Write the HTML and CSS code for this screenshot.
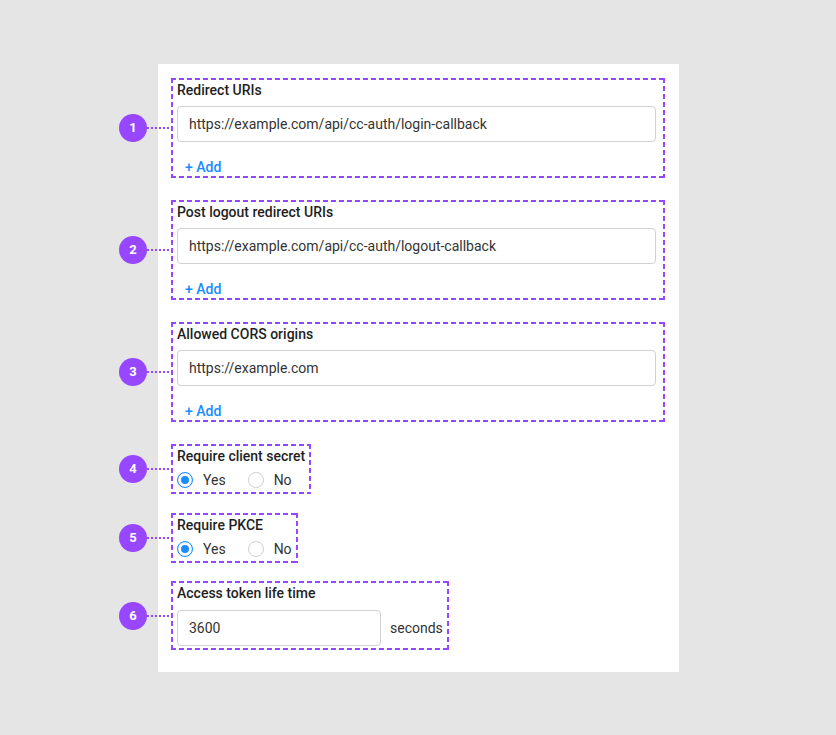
FILE: index.html
```html
<!DOCTYPE html>
<html>
<head>
<meta charset="utf-8">
<link rel="stylesheet" href="styles.css">
</head>
<body>
<div class="panel">
  <section class="box box-text">
    <span class="badge">1</span>
    <div class="label">Redirect URIs</div>
    <div class="input">https://example.com/api/cc-auth/login-callback</div>
    <div class="add">+ Add</div>
  </section>
  <section class="box box-text">
    <span class="badge">2</span>
    <div class="label">Post logout redirect URIs</div>
    <div class="input">https://example.com/api/cc-auth/logout-callback</div>
    <div class="add">+ Add</div>
  </section>
  <section class="box box-text">
    <span class="badge">3</span>
    <div class="label">Allowed CORS origins</div>
    <div class="input">https://example.com</div>
    <div class="add">+ Add</div>
  </section>
  <section class="box box-fit box-radio">
    <span class="badge">4</span>
    <div class="label">Require client secret</div>
    <div class="radios">
      <span class="radio checked"></span><span class="rlabel">Yes</span>
      <span class="radio"></span><span class="rlabel">No</span>
    </div>
  </section>
  <section class="box box-fit box-radio">
    <span class="badge">5</span>
    <div class="label">Require PKCE</div>
    <div class="radios">
      <span class="radio checked"></span><span class="rlabel">Yes</span>
      <span class="radio"></span><span class="rlabel">No</span>
    </div>
  </section>
  <section class="box box-fit box-token">
    <span class="badge">6</span>
    <div class="label">Access token life time</div>
    <div class="token-row">
      <div class="input input-short">3600</div>
      <span class="unit">seconds</span>
    </div>
  </section>
</div>
</body>
</html>
```

FILE: styles.css
```css
* { box-sizing: border-box; }
html, body { margin: 0; padding: 0; }
body {
  background: #e5e5e5;
  font-family: Roboto, "Noto Sans", Arial, sans-serif;
  color: #262626;
  width: 836px;
  height: 735px;
  overflow: hidden;
}
.panel {
  background: #fff;
  width: 521px;
  margin: 64px 0 0 158px;
  padding: 14px 14px 22px 13px;
  display: flex;
  flex-direction: column;
  align-items: flex-start;
}
.box {
  position: relative;
  padding: 2px 9px 2px 6px;
  background:
    linear-gradient(90deg, #9747ff 5px, transparent 0) left top / 8px 2px repeat-x,
    linear-gradient(90deg, #9747ff 5px, transparent 0) left bottom / 8px 2px repeat-x,
    linear-gradient(180deg, #9747ff 5px, transparent 0) left top / 2px 8px repeat-y,
    linear-gradient(180deg, #9747ff 5px, transparent 0) right top / 2px 8px repeat-y;
}
.box-text {
  width: 494px;
  margin-bottom: 22px;
}
.box-fit { padding-right: 6px; }
.box-radio { margin-bottom: 19px; }
.box-radio + .box-token { margin-top: -1px; }
.badge {
  position: absolute;
  left: -52px;
  top: 50%;
  width: 28px;
  height: 28px;
  margin-top: -14px;
  border-radius: 50%;
  background: #9747ff;
  color: #fff;
  font-size: 13px;
  font-weight: 700;
  line-height: 28px;
  text-align: center;
}
.badge::after {
  content: "";
  position: absolute;
  left: 28px;
  top: 13px;
  width: 24px;
  height: 2px;
  background: linear-gradient(90deg, #9747ff 2px, transparent 0) left top / 4px 2px repeat-x;
}
.label {
  font-size: 14px;
  font-weight: 500;
  line-height: 20px;
  color: #1f1f1f;
}
.input {
  margin-top: 6px;
  height: 36px;
  border: 1px solid #d0d0d0;
  border-radius: 4px;
  padding: 0 11px;
  font-size: 14px;
  line-height: 34px;
  color: #333;
}
.add {
  margin-top: 16px;
  padding-left: 8px;
  font-size: 14px;
  font-weight: 500;
  line-height: 18px;
  color: #1a8cff;
}
.radios {
  display: flex;
  align-items: center;
  height: 24px;
  margin-top: 2px;
  font-size: 14px;
  color: #333;
}
.radio {
  width: 16px;
  height: 16px;
  border-radius: 50%;
  border: 1px solid #d0d0d0;
  background: #fff;
  flex: none;
}
.radio.checked {
  border-color: #1a8cff;
  box-shadow: inset 0 0 0 3px #fff, inset 0 0 0 10px #1a8cff;
}
.rlabel { margin-left: 10px; margin-right: 22px; }
.rlabel:last-child { margin-right: 0; }
.token-row {
  display: flex;
  align-items: center;
  margin-top: 7px;
  margin-bottom: 2px;
}
.input-short {
  margin-top: 0;
  width: 204px;
}
.unit {
  margin-left: 9px;
  font-size: 14px;
  color: #333;
}
```
